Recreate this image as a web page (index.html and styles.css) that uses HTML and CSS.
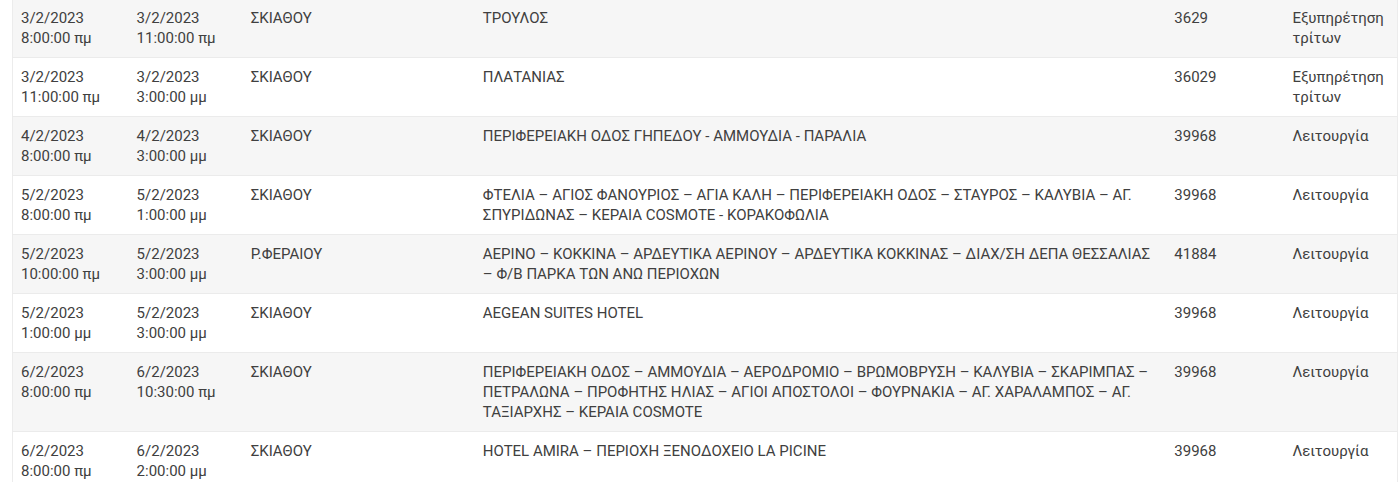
FILE: index.html
```html
<!DOCTYPE html>
<html lang="el">
<head>
<meta charset="utf-8">
<title>Διακοπές</title>
<link rel="stylesheet" href="styles.css">
</head>
<body>
<div class="wrap">
<table class="grid">
<colgroup>
<col class="c1"><col class="c2"><col class="c3"><col class="c4"><col class="c5"><col class="c6">
</colgroup>
<tbody>
<tr><td>3/2/2023<br>8:00:00 πμ</td><td>3/2/2023<br>11:00:00 πμ</td><td>ΣΚΙΑΘΟΥ</td><td>ΤΡΟΥΛΟΣ</td><td>3629</td><td>Εξυπηρέτηση τρίτων</td></tr>
<tr><td>3/2/2023<br>11:00:00 πμ</td><td>3/2/2023<br>3:00:00 μμ</td><td>ΣΚΙΑΘΟΥ</td><td>ΠΛΑΤΑΝΙΑΣ</td><td>36029</td><td>Εξυπηρέτηση τρίτων</td></tr>
<tr><td>4/2/2023<br>8:00:00 πμ</td><td>4/2/2023<br>3:00:00 μμ</td><td>ΣΚΙΑΘΟΥ</td><td>ΠΕΡΙΦΕΡΕΙΑΚΗ ΟΔΟΣ ΓΗΠΕΔΟΥ - ΑΜΜΟΥΔΙΑ - ΠΑΡΑΛΙΑ</td><td>39968</td><td>Λειτουργία</td></tr>
<tr><td>5/2/2023<br>8:00:00 πμ</td><td>5/2/2023<br>1:00:00 μμ</td><td>ΣΚΙΑΘΟΥ</td><td>ΦΤΕΛΙΑ – ΑΓΙΟΣ ΦΑΝΟΥΡΙΟΣ – ΑΓΙΑ ΚΑΛΗ – ΠΕΡΙΦΕΡΕΙΑΚΗ ΟΔΟΣ – ΣΤΑΥΡΟΣ – ΚΑΛΥΒΙΑ – ΑΓ. ΣΠΥΡΙΔΩΝΑΣ – ΚΕΡΑΙΑ COSMOTE - ΚΟΡΑΚΟΦΩΛΙΑ</td><td>39968</td><td>Λειτουργία</td></tr>
<tr><td>5/2/2023<br>10:00:00 πμ</td><td>5/2/2023<br>3:00:00 μμ</td><td>Ρ.ΦΕΡΑΙΟΥ</td><td>ΑΕΡΙΝΟ – ΚΟΚΚΙΝΑ – ΑΡΔΕΥΤΙΚΑ ΑΕΡΙΝΟΥ – ΑΡΔΕΥΤΙΚΑ ΚΟΚΚΙΝΑΣ – ΔΙΑΧ/ΣΗ ΔΕΠΑ ΘΕΣΣΑΛΙΑΣ – Φ/Β ΠΑΡΚΑ ΤΩΝ ΑΝΩ ΠΕΡΙΟΧΩΝ</td><td>41884</td><td>Λειτουργία</td></tr>
<tr><td>5/2/2023<br>1:00:00 μμ</td><td>5/2/2023<br>3:00:00 μμ</td><td>ΣΚΙΑΘΟΥ</td><td>AEGEAN SUITES HOTEL</td><td>39968</td><td>Λειτουργία</td></tr>
<tr><td>6/2/2023<br>8:00:00 πμ</td><td>6/2/2023<br>10:30:00 πμ</td><td>ΣΚΙΑΘΟΥ</td><td>ΠΕΡΙΦΕΡΕΙΑΚΗ ΟΔΟΣ – ΑΜΜΟΥΔΙΑ – ΑΕΡΟΔΡΟΜΙΟ – ΒΡΩΜΟΒΡΥΣΗ – ΚΑΛΥΒΙΑ – ΣΚΑΡΙΜΠΑΣ – ΠΕΤΡΑΛΩΝΑ – ΠΡΟΦΗΤΗΣ ΗΛΙΑΣ – ΑΓΙΟΙ ΑΠΟΣΤΟΛΟΙ – ΦΟΥΡΝΑΚΙΑ – ΑΓ. ΧΑΡΑΛΑΜΠΟΣ – ΑΓ. ΤΑΞΙΑΡΧΗΣ – ΚΕΡΑΙΑ COSMOTE</td><td>39968</td><td>Λειτουργία</td></tr>
<tr><td>6/2/2023<br>8:00:00 πμ</td><td>6/2/2023<br>2:00:00 μμ</td><td>ΣΚΙΑΘΟΥ</td><td>HOTEL AMIRA – ΠΕΡΙΟΧΗ ΞΕΝΟΔΟΧΕΙΟ LA PICINE</td><td>39968</td><td>Λειτουργία</td></tr>
</tbody>
</table>
</div>
</body>
</html>
```

FILE: styles.css
```css
html, body {
  margin: 0;
  padding: 0;
  background: #ffffff;
}

.wrap {
  padding: 0 2px 0 12px;
  margin-top: -1px;
}

.grid {
  width: 1386px;
  table-layout: fixed;
  border-collapse: collapse;
  border-left: 1px solid #ececec;
  border-right: 1px solid #ececec;
  font-family: Roboto, "Liberation Sans", sans-serif;
  font-size: 15px;
  line-height: 20px;
  color: #404040;
}

.c1 { width: 116px; }
.c2 { width: 114px; }
.c3 { width: 232px; }
.c4 { width: 691px; }
.c5 { width: 118px; }
.c6 { width: 113px; }

.grid td {
  padding: 9px 8px 9px 8px;
  vertical-align: top;
  border-bottom: 1px solid #ebebeb;
  overflow-wrap: break-word;
}

.grid tr:nth-child(odd) td {
  background: #f6f6f6;
}

.grid tr:nth-child(even) td {
  background: #ffffff;
}
```
